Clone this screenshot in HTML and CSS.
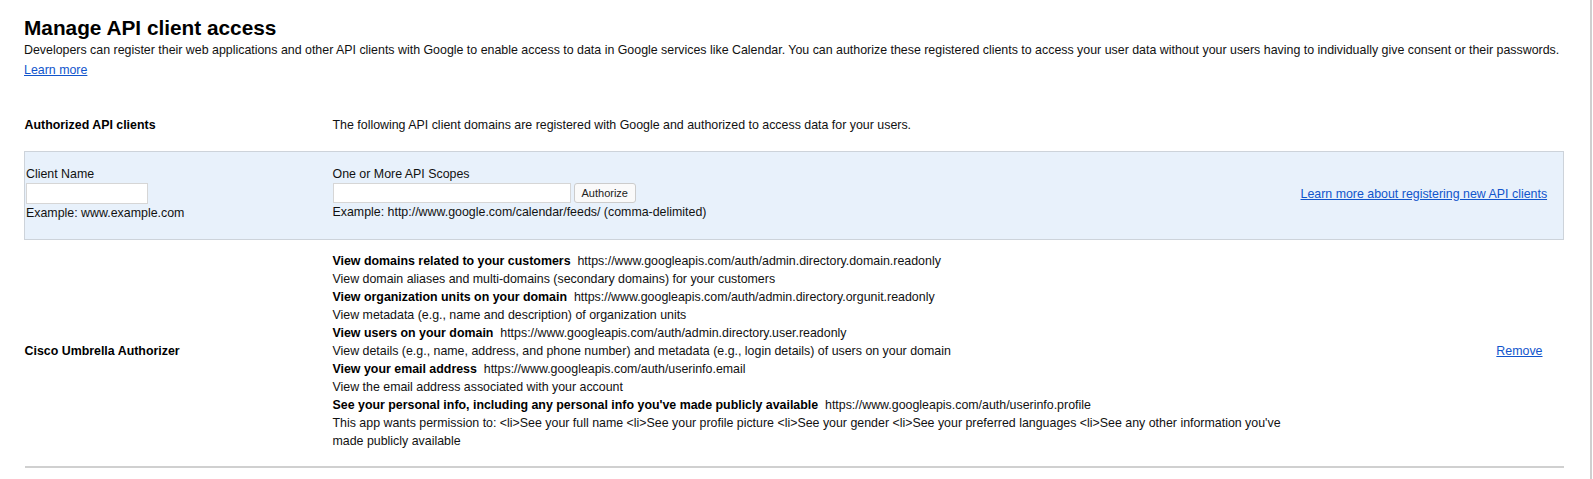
FILE: index.html
```html
<!DOCTYPE html>
<html lang="en">

<head>
    <meta charset="UTF-8">
    <meta name="viewport" content="width=device-width, initial-scale=1.0">
    <title>Manage API client access</title>
    <link rel="stylesheet" href="styles.css">
</head>

<body>
    <div class="page">
        <h1 class="title">Manage API client access</h1>
        <p class="intro">Developers can register their web applications and other API clients with Google to enable access to data in Google services like Calendar. You can authorize these registered clients to access your user data without your users having to individually give consent or their passwords.<br><a href="#">Learn more</a></p>

        <table class="clients">
            <colgroup>
                <col class="col-name">
                <col class="col-scopes">
                <col class="col-action">
            </colgroup>
            <tr class="head">
                <td class="label">Authorized API clients</td>
                <td colspan="2">The following API client domains are registered with Google and authorized to access data for your users.</td>
            </tr>
            <tr class="add">
                <td>
                    <div>Client Name</div>
                    <input class="field field-name" type="text">
                    <div>Example: www.example.com</div>
                </td>
                <td>
                    <div>One or More API Scopes</div>
                    <div class="field-row">
                        <input class="field field-scopes" type="text">
                        <button class="btn">Authorize</button>
                    </div>
                    <div>Example: http://www.google.com/calendar/feeds/ (comma-delimited)</div>
                </td>
                <td class="action"><a href="#">Learn more about registering new API clients</a></td>
            </tr>
            <tr class="client">
                <td class="label">Cisco Umbrella Authorizer</td>
                <td class="scopes">
                    <b>View domains related to your customers</b>&nbsp; https://www.googleapis.com/auth/admin.directory.domain.readonly<br>
                    View domain aliases and multi-domains (secondary domains) for your customers<br>
                    <b>View organization units on your domain</b>&nbsp; https://www.googleapis.com/auth/admin.directory.orgunit.readonly<br>
                    View metadata (e.g., name and description) of organization units<br>
                    <b>View users on your domain</b>&nbsp; https://www.googleapis.com/auth/admin.directory.user.readonly<br>
                    View details (e.g., name, address, and phone number) and metadata (e.g., login details) of users on your domain<br>
                    <b>View your email address</b>&nbsp; https://www.googleapis.com/auth/userinfo.email<br>
                    View the email address associated with your account<br>
                    <b>See your personal info, including any personal info you've made publicly available</b>&nbsp; https://www.googleapis.com/auth/userinfo.profile<br>
                    This app wants permission to: &lt;li&gt;See your full name &lt;li&gt;See your profile picture &lt;li&gt;See your gender &lt;li&gt;See your preferred languages &lt;li&gt;See any other information you've made publicly available
                </td>
                <td class="action"><a href="#">Remove</a></td>
            </tr>
        </table>
    </div>
</body>

</html>
```
FILE: styles.css
```css
* {
    margin: 0;
    padding: 0;
    box-sizing: border-box;
}

body {
    font-family: "Liberation Sans", Arial, sans-serif;
    font-size: 12.4px;
    line-height: 18px;
    color: #111;
    background-color: #fff;
}

a {
    color: #15c;
}

.page {
    width: 1592px;
    min-height: 479px;
    padding: 16px 26px 0 24px;
    border-right: 2px solid #cfcfcf;
}

.title {
    font-size: 20.8px;
    line-height: 24px;
    font-weight: bold;
    color: #000;
}

.intro {
    line-height: 20px;
}

.clients {
    width: 100%;
    margin-top: 28px;
    border-collapse: collapse;
    table-layout: fixed;
}

.clients .col-name {
    width: 308px;
}

.clients .col-scopes {
    width: 968px;
}

.clients td {
    vertical-align: top;
    padding: 0;
}

.clients .label {
    font-weight: bold;
    color: #000;
}

.clients .head td {
    padding: 8px 0 17px;
}

.clients .add {
    background-color: #e8f1fb;
    border: 1px solid #cdd3da;
}

.clients .add td {
    padding: 13px 0 17px;
}

.clients .add td:first-child {
    padding-left: 1px;
}

.clients .add td.action,
.clients .client td.action {
    vertical-align: middle;
    text-align: right;
    white-space: nowrap;
    padding-right: 21px;
}

.field {
    display: block;
    height: 21px;
    border: 1px solid #d6d6d6;
    background-color: #fff;
    font-family: inherit;
    font-size: 12px;
}

.field-name {
    width: 122px;
}

.field-row {
    display: flex;
    gap: 3px;
    align-items: center;
}

.field-scopes {
    width: 238px;
    height: 20px;
}

.btn {
    height: 20px;
    padding: 0 7px;
    font-family: inherit;
    font-size: 11px;
    color: #222;
    background-color: #fafafa;
    border: 1px solid #ccc;
    border-radius: 3px;
}

.clients .client {
    border-bottom: 2px solid #d0d0d0;
}

.clients .client td {
    padding: 12px 0 16px;
}

.clients .client td.label {
    vertical-align: middle;
}

.clients .scopes b {
    color: #000;
}
```
